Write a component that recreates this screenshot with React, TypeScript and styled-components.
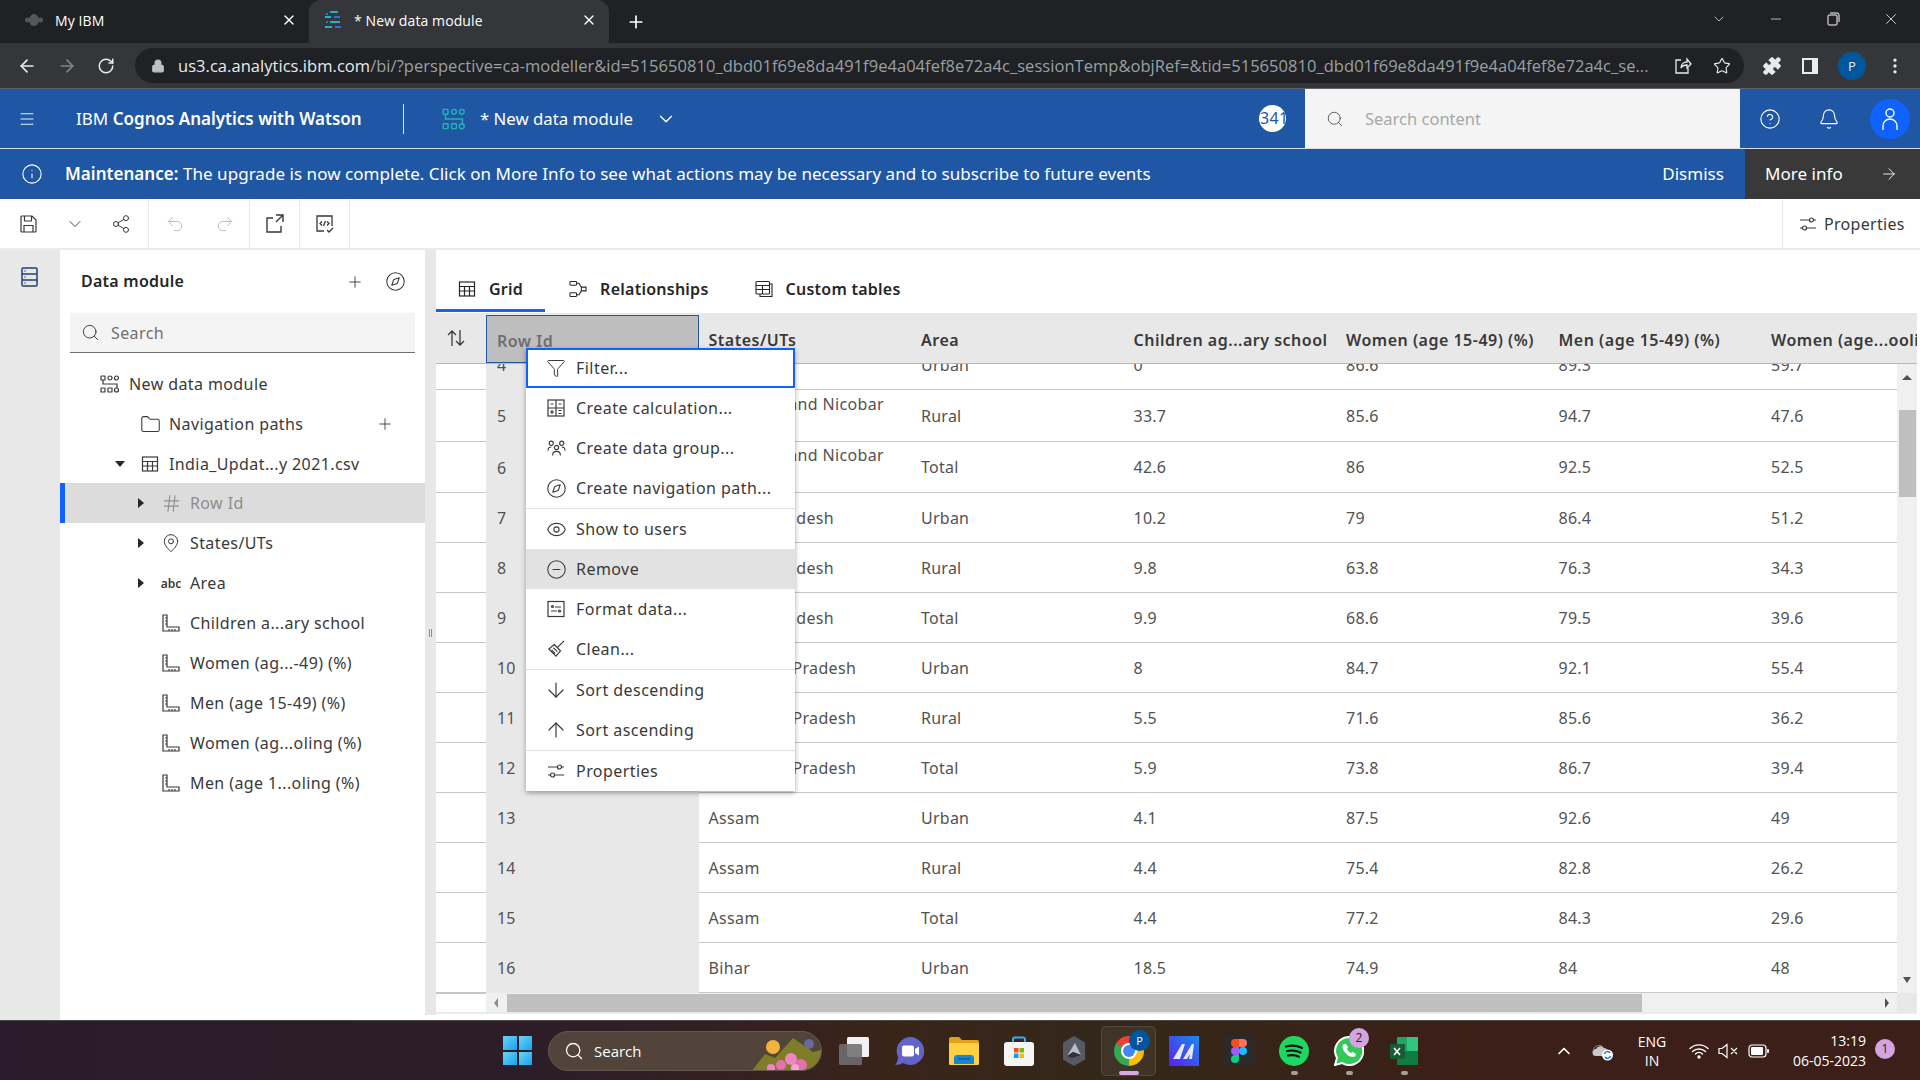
import React from "react";
import styled, { createGlobalStyle } from "styled-components";
import {
  ArrowDown, ArrowRight, ArrowUp, ArrowLeft, ChevronDown, ChevronUp, CircleHelp, CircleMinus, Compass, Eye, Folder,
  Funnel, Hash, MapPin, Menu, Minus, Plus, RotateCw, Search, Bell, Star, Puzzle, Redo2, Undo2, Share2,
  X, Lock, Info, EllipsisVertical,
} from "lucide-react";

const PLEX = `"Noto Sans", "Open Sans", Arial, sans-serif`;
const CHROME = `"Open Sans", "Noto Sans", Arial, sans-serif`;

const GlobalStyle = createGlobalStyle`
  html, body { margin: 0; padding: 0; height: 100%; overflow: hidden; }
  body { font-family: ${PLEX}; color: #393939; background: #fff; }
  #root { height: 100%; }
  * { box-sizing: border-box; }
`;

const Page = styled.div`
  width: 1920px;
  height: 1080px;
  display: flex;
  flex-direction: column;
  overflow: hidden;
`;

/* browser chrome */
const TabStrip = styled.div`
  height: 43px;
  background: #202124;
  display: flex;
  align-items: flex-end;
  color: #fff;
  font: 14px ${CHROME};
`;
const BrowserTab = styled.div<{ $active?: boolean }>`
  width: ${(p) => (p.$active ? 300 : 309)}px;
  height: 43px;
  padding: 0 12px 3px ${(p) => (p.$active ? 15 : 24)}px;
  display: flex;
  align-items: center;
  gap: ${(p) => (p.$active ? 12 : 11)}px;
  border-radius: 12px 12px 0 0;
  background: ${(p) => (p.$active ? "#35363a" : "transparent")};
  span { flex: 1; font-size: 14px; letter-spacing: 0.1px; }
`;
const NewTab = styled.div`
  margin: 0 0 0 17px;
  height: 43px;
  display: flex;
  align-items: center;
`;
const WindowControls = styled.div`
  margin-left: auto;
  height: 37px;
  align-self: flex-start;
  display: flex;
  align-items: center;
  gap: 41px;
  padding-right: 20px;
`;
const AddressBar = styled.div`
  height: 46px;
  background: #35363a;
  border-bottom: 1px solid #5f6368;
  display: flex;
  align-items: center;
  color: #e8eaed;
  padding-left: 17px;
`;
const NavIcons = styled.div`
  width: 118px;
  display: flex;
  gap: 20px;
  align-items: center;
`;
const Omnibox = styled.div`
  width: 1609px;
  height: 35px;
  border-radius: 18px;
  background: #202124;
  display: flex;
  align-items: center;
  padding: 0 13px 0 16px;
  font: 16.5px ${CHROME};
  color: #9aa0a6;
  gap: 21px;
`;
const UrlText = styled.div`
  flex: 1;
  margin-left: -8px;
  overflow: hidden;
  white-space: nowrap;
  letter-spacing: 0.04px;
  b { font-weight: 400; color: #e8eaed; }
`;
const ProfileDot = styled.div`
  width: 28px;
  height: 28px;
  border-radius: 50%;
  background: #00579d;
  color: #e8eaed;
  display: grid;
  place-items: center;
  font: 13px ${CHROME};
`;
const ExtIcons = styled.div`
  flex: 1;
  display: flex;
  align-items: center;
  gap: 19px;
  padding-left: 18px;
`;

/* product header */
const Header = styled.header`
  height: 60px;
  background: #1f57a4;
  border-bottom: 1px solid #d8dde5;
  color: #fff;
  display: flex;
  align-items: center;
`;
const Burger = styled.div`
  width: 76px;
  padding-left: 18px;
  display: flex;
`;
const Brand = styled.div`
  width: 327px;
  font-size: 17px;
  white-space: nowrap;
  b { font-weight: 600; }
`;
const ModuleName = styled.div`
  height: 30px;
  border-left: 1px solid #dfe7f2;
  padding-left: 38px;
  display: flex;
  align-items: center;
  gap: 14px;
  flex: 1;
  font-size: 16.8px;
`;
const ModuleChevron = styled.span`
  display: flex;
  margin-left: 8px;
`;
const Badge = styled.div`
  width: 27px;
  height: 27px;
  border-radius: 50%;
  background: #fff;
  color: #1f57a4;
  font-size: 16px;
  line-height: 27px;
  overflow: hidden;
  white-space: nowrap;
  margin-right: 19px;
  padding-left: 1px;
  letter-spacing: 0.4px;
`;
const HeaderSearch = styled.div`
  width: 435px;
  height: 59px;
  background: #f4f4f4;
  color: #a8a8a8;
  display: flex;
  align-items: center;
  gap: 21px;
  padding-left: 21px;
  font-size: 16.5px;
  svg { color: #525252; }
`;
const HeaderActions = styled.div`
  flex: 0 0 180px;
  display: flex;
  align-items: center;
  gap: 37px;
  padding-left: 19px;
`;
const UserCircle = styled.div`
  width: 40px;
  height: 40px;
  border-radius: 50%;
  background: #0f62fe;
  display: grid;
  place-items: center;
  margin-left: -7px;
`;

/* maintenance banner */
const Banner = styled.div`
  height: 50px;
  background: #1f57a4;
  color: #fff;
  display: flex;
  align-items: center;
  padding-left: 21px;
  font-size: 17px;
  letter-spacing: 0.04px;
`;
const BannerText = styled.div`
  flex: 1;
  padding: 0 0 1px 22px;
  b { font-weight: 600; }
`;
const Dismiss = styled.div`
  padding: 0 21px 1px 0;
`;
const MoreInfo = styled.div`
  width: 175px;
  height: 50px;
  background: #393939;
  display: flex;
  align-items: center;
  justify-content: space-between;
  padding: 0 22px 1px 20px;
`;

/* toolbar */
const Toolbar = styled.div`
  height: 51px;
  background: #fff;
  border-bottom: 2px solid #ebebeb;
  display: flex;
  color: #525252;
`;
const ToolCell = styled.div<{ $w: number; $line?: boolean; $muted?: boolean }>`
  width: ${(p) => p.$w}px;
  display: flex;
  align-items: center;
  justify-content: center;
  color: ${(p) => (p.$muted ? "#bdbdbd" : "#393939")};
  border-right: ${(p) => (p.$line ? "1px solid #ebebeb" : "none")};
`;
const ToolProps = styled.div`
  margin-left: auto;
  width: 138px;
  border-left: 1px solid #ebebeb;
  display: flex;
  align-items: center;
  gap: 7px;
  padding-left: 16px;
  font-size: 16px;
  letter-spacing: 0.3px;
  color: #393939;
`;

/* workspace */
const Workspace = styled.div`
  flex: 1;
  display: flex;
  position: relative;
  min-height: 0;
  background: #fff;
`;
const Rail = styled.aside`
  width: 60px;
  background: #e8e8e8;
  padding: 17px 0 0 21px;
  color: #1f3f77;
`;
const SidePanel = styled.section`
  width: 365px;
  background: #fff;
  display: flex;
  flex-direction: column;
`;
const PanelHead = styled.div`
  height: 63px;
  display: flex;
  align-items: center;
  padding: 0 19px 0 21px;
  gap: 21px;
  svg { color: #393939; }
`;
const PanelTitle = styled.h2`
  flex: 1;
  margin: 0 0 2px;
  font-size: 16px;
  font-weight: 600;
  letter-spacing: 0.25px;
  color: #262626;
`;
const PanelSearch = styled.div`
  height: 40px;
  margin: 0 10px;
  background: #f4f4f4;
  border-bottom: 1px solid #6f6f6f;
  display: flex;
  align-items: center;
  padding-left: 11px;
  gap: 11px;
  color: #6f6f6f;
  font-size: 16px;
  letter-spacing: 0.4px;
  svg { color: #393939; }
`;
const Tree = styled.div`
  padding-top: 11px;
`;
const TreeRow = styled.div<{ $indent: number; $selected?: boolean }>`
  height: 40px;
  display: flex;
  align-items: center;
  padding-left: ${(p) => p.$indent}px;
  font-size: 16px;
  letter-spacing: 0.4px;
  white-space: nowrap;
  color: ${(p) => (p.$selected ? "#8d8d8d" : "#393939")};
  background: ${(p) => (p.$selected ? "#dcdcdc" : "transparent")};
  border-left: ${(p) => (p.$selected ? "5px solid #0f62fe" : "0")};
  margin-top: ${(p) => (p.$selected ? "-1px" : "0")};
`;
const Caret = styled.span<{ $open?: boolean; $hidden?: boolean }>`
  width: 0;
  height: 0;
  flex: 0 0 auto;
  visibility: ${(p) => (p.$hidden ? "hidden" : "visible")};
  ${(p) =>
    p.$open
      ? "border-left: 5px solid transparent; border-right: 5px solid transparent; border-top: 6px solid #262626; margin-right: 14px;"
      : "border-top: 5px solid transparent; border-bottom: 5px solid transparent; border-left: 6px solid #262626; margin-left: 2px; margin-right: 16px;"}
`;
const TreeIcon = styled.span`
  width: 22px;
  margin-right: 8px;
  display: flex;
  justify-content: center;
  flex: 0 0 auto;
  color: inherit;
  font-size: 12px;
  font-weight: 600;
  letter-spacing: 0;
`;
const TreeAdd = styled.span`
  margin-left: auto;
  margin-right: 31px;
  display: flex;
`;
const Splitter = styled.div`
  width: 11px;
  height: 765px;
  background: #e8e8e8;
  display: flex;
  align-items: center;
  justify-content: center;
  gap: 1px;
  i { width: 1px; height: 8px; background: #8d8d8d; }
`;

/* grid */
const GridArea = styled.section`
  width: 1484px;
  display: flex;
  flex-direction: column;
  padding: 0 3px 6px 0;
  min-width: 0;
`;
const Tabs = styled.div`
  height: 63px;
  padding-top: 19px;
  display: flex;
  align-items: flex-start;
  font-size: 16px;
  font-weight: 600;
  letter-spacing: 0.25px;
  color: #262626;
`;
const GridTab = styled.div<{ $active?: boolean }>`
  height: 43px;
  padding: 0 22px;
  margin-right: 2px;
  display: flex;
  align-items: center;
  gap: 13px;
  border-bottom: 3px solid ${(p) => (p.$active ? "#0f62fe" : "transparent")};
  white-space: nowrap;
`;
const HeadRow = styled.div`
  height: 51px;
  background: #e8e8e8;
  border-bottom: 1px solid #b9b9b9;
  display: flex;
  position: relative;
  overflow: hidden;
  flex: 0 0 auto;
`;
const SortCol = styled.div`
  width: 50px;
  flex: 0 0 auto;
  display: flex;
  align-items: center;
  padding-left: 11px;
`;
const HeadCell = styled.div<{ $selected?: boolean }>`
  width: 212.5px;
  flex: 0 0 auto;
  padding: 4px 0 0 10px;
  display: flex;
  align-items: center;
  font-size: 16px;
  font-weight: 600;
  letter-spacing: 0.5px;
  color: ${(p) => (p.$selected ? "#6f6f6f" : "#393939")};
  white-space: nowrap;
  ${(p) => (p.$selected ? "background: #bebebe; border: 1px solid #1f57a4; margin-top: 2px; padding-top: 3px;" : "")}
`;
const BodyWrap = styled.div`
  flex: 1;
  display: flex;
  min-height: 0;
`;
const Viewport = styled.div`
  flex: 1;
  overflow: hidden;
`;
const RowsInner = styled.div`
  margin-top: -24px;
`;
const DataRow = styled.div<{ $h: number }>`
  height: ${(p) => p.$h}px;
  display: flex;
  white-space: nowrap;
`;
const Gutter = styled.div`
  width: 50px;
  flex: 0 0 auto;
  border-bottom: 1px solid #c6c6c6;
`;
const IdCell = styled.div`
  width: 212.5px;
  flex: 0 0 auto;
  background: #e8e8e8;
  padding-left: 11px;
  display: flex;
  align-items: center;
  font-size: 16px;
  letter-spacing: 0.2px;
  color: #525252;
`;
const Cell = styled.div<{ $wrap?: boolean }>`
  width: 212.5px;
  flex: 0 0 auto;
  padding: 0 10px;
  display: flex;
  align-items: center;
  font-size: 16px;
  letter-spacing: ${(p) => (p.$wrap ? 0.35 : 0.25)}px;
  line-height: 24px;
  color: #525252;
  border-bottom: 1px solid #c6c6c6;
  white-space: ${(p) => (p.$wrap ? "normal" : "nowrap")};
`;
const VScroll = styled.div`
  width: 20px;
  background: #f0f0f0;
  display: flex;
  flex-direction: column;
  align-items: center;
  padding-top: 11px;
  flex: 0 0 auto;
`;
const VThumb = styled.div`
  width: 17px;
  height: 87px;
  margin-top: 30px;
  background: #bfbfbf;
`;
const ArrowTri = styled.i<{ $dir: "up" | "down" | "left" | "right" }>`
  display: block;
  width: 0;
  height: 0;
  ${(p) =>
    p.$dir === "up"
      ? "border-left:5px solid transparent;border-right:5px solid transparent;border-bottom:5px solid #525252;"
      : p.$dir === "down"
      ? "border-left:4px solid transparent;border-right:4px solid transparent;border-top:6px solid #525252;margin-top:auto;margin-bottom:10px;"
      : p.$dir === "left"
      ? "border-top:5px solid transparent;border-bottom:5px solid transparent;border-right:4px solid #8d8d8d;"
      : "border-top:5px solid transparent;border-bottom:5px solid transparent;border-left:4px solid #525252;"}
`;
const HScrollRow = styled.div`
  height: 21px;
  display: flex;
  flex: 0 0 auto;
  border-bottom: 2px solid #ebebeb;
`;
const HGutter = styled.div`
  width: 50px;
  border-top: 1px solid #c6c6c6;
`;
const HTrack = styled.div`
  width: 1411px;
  height: 19px;
  background: #f0f0f0;
  display: flex;
  align-items: center;
  padding: 0 8px;
`;
const HThumb = styled.div`
  width: 1135px;
  height: 18px;
  margin-left: 9px;
  margin-right: auto;
  background: #bfbfbf;
`;
const HCorner = styled.div`
  width: 20px;
  height: 19px;
  background: #e8e8e8;
`;

/* context menu lies over the grid */
const ContextMenu = styled.div`
  position: absolute;
  left: 526px;
  top: 98px;
  width: 269px;
  background: #fff;
  box-shadow: 0 2px 5px rgba(0, 0, 0, 0.35);
  font-size: 16px;
  letter-spacing: 0.45px;
  color: #393939;
`;
const MenuItem = styled.div<{ $focus?: boolean; $hover?: boolean; $sep?: boolean }>`
  height: ${(p) => (p.$sep ? 41 : 40)}px;
  display: flex;
  align-items: center;
  gap: 11px;
  padding-left: ${(p) => (p.$focus ? 19 : 21)}px;
  background: ${(p) => (p.$hover ? "#e2e2e2" : "#fff")};
  border: ${(p) => (p.$focus ? "2px solid #0f62fe" : "none")};
  border-top: ${(p) => (p.$sep ? "1px solid #e0e0e0" : p.$focus ? "2px solid #0f62fe" : "none")};
  white-space: nowrap;
`;
const MenuIcon = styled.span`
  width: 18px;
  flex: 0 0 auto;
  display: flex;
  justify-content: center;
  svg { flex: 0 0 auto; }
`;

/* taskbar */
const Taskbar = styled.footer`
  height: 60px;
  flex: 0 0 auto;
  background: linear-gradient(90deg, #2a1c2c 0%, #2c1d28 28%, #3a241a 46%, #33281a 58%, #3b2018 76%, #3c1f18 100%);
  border-top: 1px solid #4a4a4a;
  display: flex;
  align-items: center;
  padding-left: 503px;
  color: #fff;
  font: 14px ${CHROME};
  position: relative;
`;
const WinLogo = styled.div`
  width: 29px;
  height: 29px;
  display: grid;
  grid-template-columns: 1fr 1fr;
  gap: 2px;
  i { background: linear-gradient(135deg, #69d5f7, #1aa0ef); display: block; }
`;
const TaskSearch = styled.div`
  width: 274px;
  height: 40px;
  margin: 0 4px 0 16px;
  border-radius: 20px;
  background: #52443a;
  border: 1px solid #64584e;
  display: flex;
  align-items: center;
  gap: 10px;
  padding-left: 15px;
  font-size: 15px;
  position: relative;
  overflow: hidden;
`;
const SearchArt = styled.svg`
  position: absolute;
  right: 0;
  top: 0;
`;
const TrayIcon = styled.div<{ $active?: boolean; $dot?: boolean }>`
  width: 55px;
  height: 50px;
  display: flex;
  align-items: center;
  justify-content: center;
  position: relative;
  border-radius: 5px;
  ${(p) => (p.$active ? "background: rgba(255,255,255,.06); border: 1px solid rgba(255,255,255,.1);" : "")}
  &::after {
    content: "";
    display: ${(p) => (p.$dot ? "block" : "none")};
    position: absolute;
    bottom: 1px;
    left: 50%;
    width: 7px;
    height: 4px;
    margin-left: -3px;
    border-radius: 2px;
    background: #a89f9a;
  }
`;
const ActiveBar = styled.i`
  position: absolute;
  bottom: 0;
  left: 17px;
  width: 20px;
  height: 4px;
  border-radius: 2px;
  background: #d9a6e6;
`;
const CountBubble = styled.span`
  position: absolute;
  top: 2px;
  right: 7px;
  width: 20px;
  height: 20px;
  border-radius: 50%;
  background: #d3a4e2;
  color: #2a1c2c;
  font-size: 12px;
  text-align: center;
  line-height: 20px;
  z-index: 1;
`;
const Tray = styled.div`
  margin-left: auto;
  display: flex;
  align-items: center;
  padding-right: 54px;
`;
const TrayGlyph = styled.span<{ $w: number }>`
  width: ${(p) => p.$w}px;
  display: flex;
  justify-content: center;
`;
const Lang = styled.div`
  width: 50px;
  margin-right: 7px;
  text-align: center;
  line-height: 19px;
  font-size: 14px;
`;
const Clock = styled.div`
  width: 92px;
  text-align: right;
  line-height: 20px;
  font-size: 14px;
`;
const Notify = styled.div`
  position: absolute;
  right: 25px;
  top: 18px;
  width: 20px;
  height: 20px;
  border-radius: 50%;
  background: #d3a4e2;
  color: #2a1c2c;
  font-size: 12px;
  text-align: center;
  line-height: 20px;
`;
const ChromeBall = styled.div`
  width: 30px;
  height: 30px;
  border-radius: 50%;
  background: conic-gradient(from -60deg, #ea4335 0 120deg, #fbbc04 120deg 240deg, #34a853 240deg 360deg);
  position: relative;
  &::after {
    content: "";
    position: absolute;
    inset: 9px;
    border-radius: 50%;
    background: #4285f4;
    box-shadow: 0 0 0 2px #fff;
  }
`;
const ChromeBadge = styled.span`
  position: absolute;
  top: 3px;
  right: 5px;
  width: 21px;
  height: 21px;
  border-radius: 50%;
  background: #00579d;
  font-size: 11px;
  text-align: center;
  line-height: 21px;
  z-index: 1;
`;

/* small drawings */
const ModuleIcon = ({ size = 20, color = "currentColor" }: { size?: number; color?: string }) => (
  <svg width={size} height={size} viewBox="0 0 20 20" fill="none" stroke={color} strokeWidth="1.2">
    <rect x="1" y="2" width="4" height="4" rx=".6" />
    <circle cx="10" cy="4" r="2" />
    <circle cx="16.500" cy="4" r="2" />
    <path d="M3 6v4h14v4" />
    <rect x="1" y="14" width="4" height="4" rx=".6" />
    <rect x="8" y="14" width="4" height="4" rx=".6" />
    <circle cx="16.500" cy="16" r="2" />
  </svg>
);
const TableIcon = () => (
  <svg width="18" height="18" viewBox="0 0 18 18" fill="none" stroke="currentColor" strokeWidth="1.2">
    <rect x="1.500" y="2" width="15" height="14" />
    <path d="M1.500 6.500h15M1.500 11h15M6.500 6.500V16M11.500 6.500V16" />
  </svg>
);
const TablesIcon = () => (
  <svg width="18" height="18" viewBox="0 0 18 18" fill="none" stroke="currentColor" strokeWidth="1.1">
    <rect x="1" y="1.500" width="13.500" height="12.500" rx="1" />
    <path d="M1 5.500h13.500M1 9.500h13.500M7.500 5.500V14M14.500 4H17v12.500H5V14" />
  </svg>
);
const MeasureIcon = () => (
  <svg width="18" height="18" viewBox="0 0 18 18" fill="none" stroke="currentColor" strokeWidth="1.2">
    <path d="M1 1h4v12h12v4H1z" />
    <path d="M3 4h2M3 7h2M3 10h2M7 15v2M10 15v2M13 15v2" />
  </svg>
);
const SlidersIcon = () => (
  <svg width="18" height="18" viewBox="0 0 18 18" fill="none" stroke="currentColor" strokeWidth="1.2">
    <path d="M1 5h10M14 5h3M1 13h3M7 13h10" />
    <circle cx="12.500" cy="5" r="2" />
    <circle cx="5.500" cy="13" r="2" />
  </svg>
);
const CalcIcon = () => (
  <svg width="18" height="18" viewBox="0 0 18 18" fill="none" stroke="currentColor" strokeWidth="1.2">
    <rect x="1" y="1" width="16" height="16" />
    <path d="M9 1v16M1 9h16M3.500 5h3M11.500 5h3M11.500 11.500h3M11.500 14.500h3M5 11v4M3 13h4" />
  </svg>
);
const GroupIcon = () => (
  <svg width="19" height="18" viewBox="0 0 20 18" fill="none" stroke="currentColor" strokeWidth="1.2">
    <circle cx="4.500" cy="4" r="2.200" />
    <circle cx="15.500" cy="4" r="2.200" />
    <circle cx="10" cy="8.500" r="2.200" />
    <path d="M1 12c0-2.500 1.500-4 3.500-4M19 12c0-2.500-1.500-4-3.500-4M6 17v-1c0-2 1.500-3.500 4-3.500s4 1.500 4 3.500v1" />
  </svg>
);
const FormatIcon = () => (
  <svg width="18" height="18" viewBox="0 0 18 18" fill="none" stroke="currentColor" strokeWidth="1.2">
    <rect x="1" y="1.500" width="16" height="15" />
    <circle cx="5.500" cy="6.500" r="1" />
    <path d="M8 7h6M4 11h6" />
    <circle cx="12.500" cy="11" r="1" />
  </svg>
);
const BroomIcon = () => (
  <svg width="18" height="18" viewBox="0 0 20 20" fill="none" stroke="currentColor" strokeWidth="1.3">
    <path d="M12 8l7-7M8 5l7 7-5 6-8-8z" />
    <path d="M5 11l4 4M7 8.500l4.500 4.500" />
  </svg>
);
const RelIcon = () => (
  <svg width="18" height="18" viewBox="0 0 19 18" fill="none" stroke="currentColor" strokeWidth="1.1">
    <rect x="1" y="1" width="7" height="4" rx="1" />
    <rect x="1" y="13" width="7" height="4" rx="1" />
    <path d="M8 3h2.500L13 7h5v4h-5l-2.500 4H8M13 7v4" />
  </svg>
);
const SortIcon = () => (
  <svg width="18" height="20" viewBox="0 0 18 20" fill="none" stroke="#393939" strokeWidth="1.3">
    <path d="M5 18V3M1 7l4-4 4 4M13 2v15M9 13l4 4 4-4" />
  </svg>
);
const SaveIcon = () => (
  <svg width="17" height="18" viewBox="0 0 17 18" fill="none" stroke="currentColor" strokeWidth="1.2">
    <path d="M1 2a1 1 0 0 1 1-1h10l4 4v11a1 1 0 0 1-1 1H2a1 1 0 0 1-1-1z" />
    <path d="M4.500 1v5h7V1M4 17v-6.500h9V17" />
  </svg>
);
const OpenIcon = () => (
  <svg width="19" height="19" viewBox="0 0 19 19" fill="none" stroke="currentColor" strokeWidth="1.4">
    <path d="M8 4H2v14h14v-6M11 1h7v7M18 1l-7 7" />
  </svg>
);
const CodeCheck = () => (
  <svg width="20" height="20" viewBox="0 0 20 20" fill="none" stroke="currentColor" strokeWidth="1.3">
    <path d="M9 17H2V2h15v10" />
    <path d="M7 7.500L5 9.500l2 2M12 7.500l2 2-2 2M10.500 7l-2 5M12 16l2 2 4-4" />
  </svg>
);
const ShareOutIcon = () => (
  <svg width="18" height="19" viewBox="0 0 18 19" fill="none" stroke="#e8eaed" strokeWidth="1.3">
    <path d="M7 4H2v13h12v-5" />
    <path d="M7 12c0-4 3-6 6-6V3l4 5-4 4V9c-3 0-5 1-6 3z" />
  </svg>
);
const TabFavicon = () => (
  <svg width="18" height="20" viewBox="0 0 18 20">
    <path d="M6 2h8M1 7h6M6 12h10M1 17h7" stroke="#1fb5c4" strokeWidth="2.200" />
    <path d="M3 3v2M10 7h6M2 12h2M11 17h6" stroke="#2f6fdc" strokeWidth="2.200" />
  </svg>
);
const BeeFavicon = () => (
  <svg width="20" height="16" viewBox="0 0 20 16" fill="#55565a">
    <ellipse cx="10" cy="8" rx="5" ry="6" />
    <circle cx="3.500" cy="8" r="2.500" />
    <circle cx="16.500" cy="8" r="2.500" />
  </svg>
);
const SidePanelIcon = () => (
  <svg width="18" height="18" viewBox="0 0 18 18">
    <path fillRule="evenodd" d="M1 1h16v16H1zM3 3v12h8V3z" fill="#e8eaed" />
  </svg>
);
const RailIcon = () => (
  <svg width="17" height="20" viewBox="0 0 17 20" fill="none" stroke="currentColor" strokeWidth="1.500">
    <rect x="1" y="1" width="15" height="18" rx="1" />
    <path d="M1 7h15M1 13h15M3.500 4h1M3.500 10h1M3.500 16h1" />
  </svg>
);
const CloudSync = () => (
  <svg width="22" height="20" viewBox="0 0 22 20">
    <path d="M4 15a3.500 3.500 0 0 1 0-7c1-3 6-4 8-1 2 0 4 2 4 4l-3 4z" fill="#c9c9c9" />
    <path d="M1 10a6 6 0 0 1 11-3" stroke="#7d7d7d" fill="none" />
    <circle cx="15.500" cy="14" r="5.500" fill="#fff" />
    <path d="M12.500 13a3 3 0 0 1 5.500-1M18.500 15a3 3 0 0 1-5.500 1" stroke="#1a73e8" strokeWidth="1.500" fill="none" />
  </svg>
);
const WifiIcon = () => (
  <svg width="20" height="16" viewBox="0 0 20 16" fill="none" stroke="#fff" strokeWidth="1.400" strokeLinecap="round">
    <path d="M1 5.500a13 13 0 0 1 18 0M3.500 8.500a9.500 9.500 0 0 1 13 0M6.500 11a5 5 0 0 1 7 0" />
    <circle cx="10" cy="14" r="1" fill="#fff" />
  </svg>
);
const MuteIcon = () => (
  <svg width="20" height="16" viewBox="0 0 20 16" fill="none" stroke="#fff" strokeWidth="1.200">
    <path d="M1 5.500h3L9 1.500v13l-5-4H1zM13 5l6 6M19 5l-6 6" />
  </svg>
);
const BatteryIcon = () => (
  <svg width="21" height="14" viewBox="0 0 21 14">
    <rect x="1" y="1" width="17" height="12" rx="3" fill="none" stroke="#fff" strokeWidth="1.200" />
    <rect x="3" y="3" width="12" height="8" rx="1" fill="#fff" />
    <rect x="19" y="5" width="2" height="4" rx="1" fill="#fff" />
  </svg>
);

const rows = [
  { id: 4, st: "Andaman and Nicobar Islands", a: "Urban", v: ["0", "86.6", "89.3", "59.7"], h: 50 },
  { id: 5, st: "Andaman and Nicobar Islands", a: "Rural", v: ["33.7", "85.6", "94.7", "47.6"], h: 52 },
  { id: 6, st: "Andaman and Nicobar Islands", a: "Total", v: ["42.6", "86", "92.5", "52.5"], h: 51 },
  { id: 7, st: "Andhra Pradesh", a: "Urban", v: ["10.2", "79", "86.4", "51.2"], h: 50 },
  { id: 8, st: "Andhra Pradesh", a: "Rural", v: ["9.8", "63.8", "76.3", "34.3"], h: 50 },
  { id: 9, st: "Andhra Pradesh", a: "Total", v: ["9.9", "68.6", "79.5", "39.6"], h: 50 },
  { id: 10, st: "Arunachal Pradesh", a: "Urban", v: ["8", "84.7", "92.1", "55.4"], h: 50 },
  { id: 11, st: "Arunachal Pradesh", a: "Rural", v: ["5.5", "71.6", "85.6", "36.2"], h: 50 },
  { id: 12, st: "Arunachal Pradesh", a: "Total", v: ["5.9", "73.8", "86.7", "39.4"], h: 50 },
  { id: 13, st: "Assam", a: "Urban", v: ["4.1", "87.5", "92.6", "49"], h: 50 },
  { id: 14, st: "Assam", a: "Rural", v: ["4.4", "75.4", "82.8", "26.2"], h: 50 },
  { id: 15, st: "Assam", a: "Total", v: ["4.4", "77.2", "84.3", "29.6"], h: 50 },
  { id: 16, st: "Bihar", a: "Urban", v: ["18.5", "74.9", "84", "48"], h: 50 },
];

const heads = ["States/UTs", "Area", "Children ag...ary school", "Women (age 15-49) (%)", "Men (age 15-49) (%)", "Women (age...ooling (%)"];

const fields = [
  { t: "States/UTs", i: <MapPin size={20} strokeWidth={1.2} />, c: true },
  { t: "Area", i: <>abc</>, c: true },
  { t: "Children a...ary school", i: <MeasureIcon />, c: false },
  { t: "Women (ag...-49) (%)", i: <MeasureIcon />, c: false },
  { t: "Men (age 15-49) (%)", i: <MeasureIcon />, c: false },
  { t: "Women (ag...oling (%)", i: <MeasureIcon />, c: false },
  { t: "Men (age 1...oling (%)", i: <MeasureIcon />, c: false },
];

export default function App() {
  return (
    <Page>
      <GlobalStyle />
      <TabStrip>
        <BrowserTab>
          <BeeFavicon />
          <span>My IBM</span>
          <X size={16} />
        </BrowserTab>
        <BrowserTab $active>
          <TabFavicon />
          <span>* New data module</span>
          <X size={16} />
        </BrowserTab>
        <NewTab>
          <Plus size={20} />
        </NewTab>
        <WindowControls>
          <ChevronDown size={16} strokeWidth={1} />
          <Minus size={16} strokeWidth={1} />
          <svg width="16" height="16" viewBox="0 0 16 16" fill="none" stroke="#fff" strokeWidth="1">
            <rect x="3" y="4" width="9" height="10" rx="1" />
            <path d="M5 2h7a2 2 0 0 1 2 2v7" />
          </svg>
          <X size={18} strokeWidth={1} />
        </WindowControls>
      </TabStrip>
      <AddressBar>
        <NavIcons>
          <ArrowLeft size={20} />
          <ArrowRight size={20} color="#80868b" />
          <RotateCw size={18} />
        </NavIcons>
        <Omnibox>
          <Lock size={14} fill="#bdc1c6" color="#bdc1c6" />
          <UrlText>
            <b>us3.ca.analytics.ibm.com</b>/bi/?perspective=ca-modeller&amp;id=515650810_dbd01f69e8da491f9e4a04fef8e72a4c_sessionTemp&amp;objRef=&amp;tid=515650810_dbd01f69e8da491f9e4a04fef8e72a4c_se...
          </UrlText>
          <ShareOutIcon />
          <Star size={18} color="#e8eaed" strokeWidth={1.5} />
        </Omnibox>
        <ExtIcons>
          <Puzzle size={20} fill="#e8eaed" strokeWidth={1} />
          <SidePanelIcon />
          <ProfileDot>P</ProfileDot>
          <EllipsisVertical size={20} />
        </ExtIcons>
      </AddressBar>

      <Header>
        <Burger>
          <Menu size={18} strokeWidth={1.2} />
        </Burger>
        <Brand>
          IBM <b>Cognos Analytics with Watson</b>
        </Brand>
        <ModuleName>
          <ModuleIcon size={24} color="#1fb5b5" />
          <span>* New data module</span>
          <ModuleChevron>
            <ChevronDown size={22} strokeWidth={1.5} />
          </ModuleChevron>
        </ModuleName>
        <Badge>341</Badge>
        <HeaderSearch>
          <Search size={18} strokeWidth={1.2} />
          Search content
        </HeaderSearch>
        <HeaderActions>
          <CircleHelp size={22} strokeWidth={1.2} />
          <Bell size={22} strokeWidth={1.2} />
          <UserCircle>
            <svg width="20" height="24" viewBox="0 0 20 24" fill="none" stroke="#fff" strokeWidth="1.400">
              <circle cx="10" cy="6" r="4" />
              <path d="M3 23v-4a7 7 0 0 1 14 0v4" />
            </svg>
          </UserCircle>
        </HeaderActions>
      </Header>

      <Banner>
        <Info size={22} strokeWidth={1.2} />
        <BannerText>
          <b>Maintenance:</b> The upgrade is now complete. Click on More Info to see what actions may be necessary and to subscribe to future events
        </BannerText>
        <Dismiss>Dismiss</Dismiss>
        <MoreInfo>
          More info
          <ArrowRight size={18} strokeWidth={1.2} />
        </MoreInfo>
      </Banner>

      <Toolbar>
        <ToolCell $w={56}><SaveIcon /></ToolCell>
        <ToolCell $w={38}><ChevronDown size={20} strokeWidth={1.1} /></ToolCell>
        <ToolCell $w={55} $line><Share2 size={20} strokeWidth={1.2} /></ToolCell>
        <ToolCell $w={51} $muted><Undo2 size={20} strokeWidth={1.2} /></ToolCell>
        <ToolCell $w={50} $muted $line><Redo2 size={20} strokeWidth={1.2} /></ToolCell>
        <ToolCell $w={50} $line><OpenIcon /></ToolCell>
        <ToolCell $w={50} $line><CodeCheck /></ToolCell>
        <ToolProps>
          <SlidersIcon />
          Properties
        </ToolProps>
      </Toolbar>

      <Workspace>
        <Rail>
          <RailIcon />
        </Rail>
        <SidePanel>
          <PanelHead>
            <PanelTitle>Data module</PanelTitle>
            <Plus size={18} strokeWidth={1.2} />
            <Compass size={21} strokeWidth={1.2} />
          </PanelHead>
          <PanelSearch>
            <Search size={19} strokeWidth={1.2} />
            Search
          </PanelSearch>
          <Tree>
            <TreeRow $indent={39}>
              <TreeIcon><ModuleIcon size={20} /></TreeIcon>
              New data module
            </TreeRow>
            <TreeRow $indent={79}>
              <TreeIcon><Folder size={21} strokeWidth={1.2} /></TreeIcon>
              Navigation paths
              <TreeAdd><Plus size={18} strokeWidth={1.2} /></TreeAdd>
            </TreeRow>
            <TreeRow $indent={55}>
              <Caret $open />
              <TreeIcon><TableIcon /></TreeIcon>
              India_Updat...y 2021.csv
            </TreeRow>
            <TreeRow $indent={71} $selected>
              <Caret />
              <TreeIcon><Hash size={21} strokeWidth={1.2} /></TreeIcon>
              Row Id
            </TreeRow>
            {fields.map((r) => (
              <TreeRow key={r.t} $indent={76}>
                <Caret $hidden={!r.c} />
                <TreeIcon>{r.i}</TreeIcon>
                {r.t}
              </TreeRow>
            ))}
          </Tree>
        </SidePanel>
        <Splitter>
          <i />
          <i />
        </Splitter>
        <GridArea>
          <Tabs>
            <GridTab $active><TableIcon />Grid</GridTab>
            <GridTab><RelIcon />Relationships</GridTab>
            <GridTab><TablesIcon />Custom tables</GridTab>
          </Tabs>
          <HeadRow>
            <SortCol><SortIcon /></SortCol>
            <HeadCell $selected>Row Id</HeadCell>
            {heads.map((h) => (
              <HeadCell key={h}>{h}</HeadCell>
            ))}
          </HeadRow>
          <BodyWrap>
            <Viewport>
              <RowsInner>
                {rows.map((r) => (
                  <DataRow key={r.id} $h={r.h}>
                    <Gutter />
                    <IdCell>{r.id}</IdCell>
                    <Cell $wrap>{r.st}</Cell>
                    <Cell>{r.a}</Cell>
                    {r.v.map((v, i) => (
                      <Cell key={i}>{v}</Cell>
                    ))}
                  </DataRow>
                ))}
              </RowsInner>
            </Viewport>
            <VScroll>
              <ArrowTri $dir="up" />
              <VThumb />
              <ArrowTri $dir="down" />
            </VScroll>
          </BodyWrap>
          <HScrollRow>
            <HGutter />
            <HTrack>
              <ArrowTri $dir="left" />
              <HThumb />
              <ArrowTri $dir="right" />
            </HTrack>
            <HCorner />
          </HScrollRow>
        </GridArea>

        <ContextMenu>
          <MenuItem $focus><MenuIcon><Funnel size={20} strokeWidth={1.2} /></MenuIcon>Filter...</MenuItem>
          <MenuItem><MenuIcon><CalcIcon /></MenuIcon>Create calculation...</MenuItem>
          <MenuItem><MenuIcon><GroupIcon /></MenuIcon>Create data group...</MenuItem>
          <MenuItem><MenuIcon><Compass size={21} strokeWidth={1.2} /></MenuIcon>Create navigation path...</MenuItem>
          <MenuItem $sep><MenuIcon><Eye size={21} strokeWidth={1.2} /></MenuIcon>Show to users</MenuItem>
          <MenuItem $hover><MenuIcon><CircleMinus size={21} strokeWidth={1.2} /></MenuIcon>Remove</MenuItem>
          <MenuItem><MenuIcon><FormatIcon /></MenuIcon>Format data...</MenuItem>
          <MenuItem><MenuIcon><BroomIcon /></MenuIcon>Clean...</MenuItem>
          <MenuItem $sep><MenuIcon><ArrowDown size={24} strokeWidth={1.2} /></MenuIcon>Sort descending</MenuItem>
          <MenuItem><MenuIcon><ArrowUp size={24} strokeWidth={1.2} /></MenuIcon>Sort ascending</MenuItem>
          <MenuItem $sep><MenuIcon><SlidersIcon /></MenuIcon>Properties</MenuItem>
        </ContextMenu>
      </Workspace>

      <Taskbar>
        <WinLogo><i /><i /><i /><i /></WinLogo>
        <TaskSearch>
          <Search size={20} strokeWidth={1.6} />
          Search
          <SearchArt width="70" height="40" viewBox="0 0 70 40">
            <path d="M0 40 L14 22 L24 26 L42 6 L62 20 L70 18 V40z" fill="#7f7d2a" />
            <circle cx="22" cy="15" r="7" fill="#f2b33a" />
            <circle cx="58" cy="12" r="5" fill="#6a6a9a" />
            <circle cx="30" cy="33" r="5" fill="#e56fb0" />
            <circle cx="40" cy="27" r="6" fill="#ee86c4" />
            <circle cx="50" cy="33" r="6" fill="#e56fb0" />
            <circle cx="44" cy="36" r="4" fill="#f4a5d4" />
            <circle cx="20" cy="36" r="4" fill="#ee86c4" />
          </SearchArt>
        </TaskSearch>
        <TrayIcon>
          <svg width="32" height="30" viewBox="0 0 32 30">
            <rect x="9" y="1" width="22" height="20" rx="1.500" fill="#f2f2f2" />
            <rect x="1" y="8" width="23" height="21" rx="1.500" fill="#6e6e6e" opacity=".88" />
          </svg>
        </TrayIcon>
        <TrayIcon>
          <svg width="30" height="30" viewBox="0 0 30 30">
            <path d="M16 1a14 14 0 1 1-7 26c-2 1-5 2-8 2 2-2 3-5 3-8A14 14 0 0 1 16 1z" fill="#6264c8" />
            <rect x="8" y="9.500" width="12" height="11" rx="2" fill="#fff" />
            <path d="M21 13l4-2.500v9L21 17z" fill="#fff" />
          </svg>
        </TrayIcon>
        <TrayIcon>
          <svg width="30" height="28" viewBox="0 0 30 28">
            <path d="M0 2a2 2 0 0 1 2-2h8l3 3h15a2 2 0 0 1 2 2v4H0z" fill="#e0a11b" />
            <rect y="6" width="30" height="22" rx="1.500" fill="#fdd046" />
            <path d="M5 27v-6a3 3 0 0 1 3-3h14a3 3 0 0 1 3 3v6z" fill="#1785d8" />
            <rect x="9" y="21" width="12" height="1.500" fill="#0e5fa6" />
          </svg>
        </TrayIcon>
        <TrayIcon>
          <svg width="30" height="30" viewBox="0 0 30 30">
            <path d="M9 7V3.500a2 2 0 0 1 2-2h8a2 2 0 0 1 2 2V7" stroke="#29b6f6" strokeWidth="2" fill="none" />
            <rect y="6" width="30" height="24" rx="3" fill="#f5f5f5" />
            <rect x="10" y="12" width="4.500" height="4.500" fill="#f25022" />
            <rect x="15.500" y="12" width="4.500" height="4.500" fill="#7fba00" />
            <rect x="10" y="17.500" width="4.500" height="4.500" fill="#00a4ef" />
            <rect x="15.500" y="17.500" width="4.500" height="4.500" fill="#ffb900" />
          </svg>
        </TrayIcon>
        <TrayIcon>
          <svg width="26" height="30" viewBox="0 0 26 30">
            <path d="M13 0l11 6.500v17L13 30 2 23.500v-17z" fill="#565a62" />
            <path d="M14 7l6 12-8-3-6 4z" fill="#b9bdc3" />
            <path d="M12 16l8 3-9 3-5-2z" fill="#2f3238" />
          </svg>
        </TrayIcon>
        <TrayIcon $active>
          <ChromeBadge>P</ChromeBadge>
          <ChromeBall />
          <ActiveBar />
        </TrayIcon>
        <TrayIcon>
          <svg width="30" height="30" viewBox="0 0 30 30">
            <defs>
              <linearGradient id="mz" x1="1" y1="0" x2="0" y2="1">
                <stop offset="0" stopColor="#1a8ae8" />
                <stop offset="1" stopColor="#5a20f0" />
              </linearGradient>
            </defs>
            <rect width="30" height="30" fill="url(#mz)" />
            <path d="M4 23L13 8h3l-5 15zM14 23l9-15h2l-2 15h-3l1-5-3 5z" fill="#e6e4ff" />
          </svg>
        </TrayIcon>
        <TrayIcon>
          <svg width="30" height="30" viewBox="0 0 30 30">
            <rect width="30" height="30" fill="#2a2a2a" />
            <path d="M15 3h-4a4 4 0 0 0 0 8h4z" fill="#f24e1e" />
            <path d="M15 3h4a4 4 0 0 1 0 8h-4z" fill="#ff7262" />
            <path d="M15 11h-4a4 4 0 0 0 0 8h4z" fill="#a259ff" />
            <circle cx="19" cy="15" r="4" fill="#1abcfe" />
            <path d="M11 19h4v4a4 4 0 1 1-4-4z" fill="#0acf83" />
          </svg>
        </TrayIcon>
        <TrayIcon $dot>
          <svg width="30" height="30" viewBox="0 0 30 30">
            <circle cx="15" cy="15" r="15" fill="#1ed760" />
            <path d="M7 10.500c6-1.500 11-1 16 1.500M8 15c5-1 9-.7 13.500 1.500M9 19.500c4-.8 7.500-.5 11 1.200" stroke="#111" strokeWidth="2.200" strokeLinecap="round" fill="none" />
          </svg>
        </TrayIcon>
        <TrayIcon $dot>
          <CountBubble>2</CountBubble>
          <svg width="30" height="30" viewBox="0 0 30 30">
            <path d="M15 1a14 14 0 0 0-12 21L1 29l7-2A14 14 0 1 0 15 1z" fill="#34c759" stroke="#fff" strokeWidth="2" />
            <path d="M10 8c-2 1-2 4 0 7s5 6 9 6c2 0 3-2 3-3l-3-2-2 1c-2-1-3-2-4-4l1-2-2-3z" fill="#fff" />
          </svg>
        </TrayIcon>
        <TrayIcon $dot>
          <svg width="30" height="30" viewBox="0 0 30 30">
            <rect x="8" y="1" width="21" height="28" rx="1" fill="#21a366" />
            <rect x="18" y="1" width="11" height="14" fill="#33c481" />
            <rect x="8" y="15" width="21" height="14" fill="#107c41" />
            <rect x="1" y="8" width="15" height="15" rx="1" fill="#185c37" />
            <path d="M5 12l6 7M11 12l-6 7" stroke="#fff" strokeWidth="1.500" />
          </svg>
        </TrayIcon>
        <Tray>
          <TrayGlyph $w={30}><ChevronUp size={20} /></TrayGlyph>
          <TrayGlyph $w={48}><CloudSync /></TrayGlyph>
          <Lang>ENG<br />IN</Lang>
          <TrayGlyph $w={30}><WifiIcon /></TrayGlyph>
          <TrayGlyph $w={28}><MuteIcon /></TrayGlyph>
          <TrayGlyph $w={32}><BatteryIcon /></TrayGlyph>
          <Clock>13:19<br />06-05-2023</Clock>
        </Tray>
        <Notify>1</Notify>
      </Taskbar>
    </Page>
  );
}
